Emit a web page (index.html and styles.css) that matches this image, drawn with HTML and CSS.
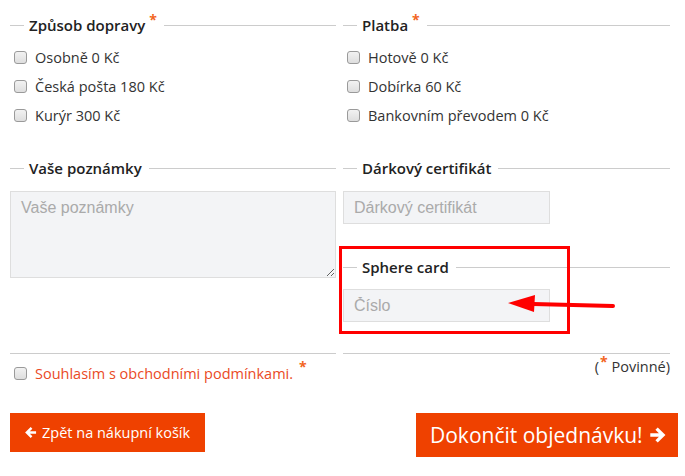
FILE: index.html
```html
<!DOCTYPE html>
<html lang="cs">
<head>
<meta charset="utf-8">
<title>Objednávka</title>
<link rel="stylesheet" href="styles.css">
</head>
<body>
<div class="page">
  <div class="grid">
    <section class="group">
      <h3 class="legend"><span class="legend-text">Způsob dopravy<sup class="req">*</sup></span></h3>
      <label class="opt"><input type="checkbox" class="cb"><span>Osobně 0 Kč</span></label>
      <label class="opt"><input type="checkbox" class="cb"><span>Česká pošta 180 Kč</span></label>
      <label class="opt"><input type="checkbox" class="cb"><span>Kurýr 300 Kč</span></label>
    </section>
    <section class="group">
      <h3 class="legend"><span class="legend-text">Platba<sup class="req">*</sup></span></h3>
      <label class="opt"><input type="checkbox" class="cb"><span>Hotově 0 Kč</span></label>
      <label class="opt"><input type="checkbox" class="cb"><span>Dobírka 60 Kč</span></label>
      <label class="opt"><input type="checkbox" class="cb"><span>Bankovním převodem 0 Kč</span></label>
    </section>

    <section class="group row2">
      <h3 class="legend"><span class="legend-text">Vaše poznámky</span></h3>
      <textarea class="field notes" placeholder="Vaše poznámky"></textarea>
    </section>
    <section class="group row2">
      <h3 class="legend"><span class="legend-text">Dárkový certifikát</span></h3>
      <input class="field short" type="text" placeholder="Dárkový certifikát">
      <h3 class="legend sphere"><span class="legend-text">Sphere card</span></h3>
      <input class="field short" type="text" placeholder="Číslo">
    </section>

    <div class="foot-cell">
      <label class="opt agree"><input type="checkbox" class="cb"><span>Souhlasím s obchodními podmínkami.</span><sup class="req">*</sup></label>
    </div>
    <div class="foot-cell right">
      <span class="required-note">(<sup class="req">*</sup> Povinné)</span>
    </div>
  </div>

  <div class="buttons">
    <button class="btn back" type="button">
      <svg class="ico" viewBox="0 0 14 14" width="13" height="13" aria-hidden="true"><path d="M7.2 1.2 L1.2 7 L7.2 12.8 L9 11 L6.3 8.4 H13 V5.6 H6.3 L9 3 Z" fill="#fff"/></svg>
      Zpět na nákupní košík
    </button>
    <button class="btn finish" type="button">
      Dokončit objednávku!
      <svg class="ico big" viewBox="0 0 14 14" width="18" height="18" aria-hidden="true"><path d="M6.8 1.2 L12.8 7 L6.8 12.8 L5 11 L7.7 8.4 H1 V5.6 H7.7 L5 3 Z" fill="#fff"/></svg>
    </button>
  </div>

  <div class="highlight"></div>
  <svg class="annot-arrow" width="120" height="24" viewBox="0 0 120 24" aria-hidden="true">
    <path d="M30 11 L110 13" stroke="#f00" stroke-width="4" stroke-linecap="round" fill="none"/>
    <path d="M5 10 L32 2 L31 19 Z" fill="#f00"/>
  </svg>
</div>
</body>
</html>
```

FILE: styles.css
```css
* { box-sizing: border-box; }

html, body {
  margin: 0;
  padding: 0;
  background: #fff;
}

body {
  font-family: "Open Sans", "Noto Sans", sans-serif;
  color: #333;
  font-size: 14.5px;
}

.page {
  position: relative;
  width: 685px;
  height: 476px;
  padding: 15px 7px 0 10px;
}

.grid {
  width: 660px;
  display: grid;
  grid-template-columns: 326px 327px;
  column-gap: 7px;
}

.group {
  display: flex;
  flex-direction: column;
  align-items: flex-start;
}

.legend {
  width: 100%;
  margin: 0 0 8px;
  height: 20px;
  display: flex;
  align-items: center;
  font-size: 15px;
  font-weight: 600;
  color: #222;
  line-height: 20px;
}

.legend::before {
  content: "";
  width: 14px;
  height: 1px;
  background: #ccc;
  flex: none;
}

.legend::after {
  content: "";
  flex: 1;
  height: 1px;
  background: #ccc;
}

.legend-text {
  padding: 0 7px 0 5px;
  position: relative;
}

.req {
  color: #f26522;
  font-size: 14px;
  font-weight: 700;
  vertical-align: top;
  line-height: 1;
  position: relative;
  top: -2px;
  margin-left: 4px;
}

.opt {
  display: flex;
  align-items: center;
  height: 29px;
  padding-left: 4px;
  color: #333;
  font-size: 14.5px;
}

.cb {
  -webkit-appearance: none;
  appearance: none;
  width: 13px;
  height: 13px;
  margin: 0 8px 0 0;
  border: 1px solid #9a9a9a;
  border-radius: 3px;
  background: linear-gradient(#f2f2f2, #dedede);
  flex: none;
}

.row2 {
  margin-top: 28px;
}

.row2 .legend {
  margin-bottom: 13px;
}

.field {
  font-family: "Liberation Sans", Arial, sans-serif;
  font-size: 16px;
  background: #f3f4f6;
  border: 1px solid #dedede;
  color: #555;
  border-radius: 0;
  outline: none;
}

.field::placeholder {
  color: #aaa;
}

.notes {
  width: 326px;
  height: 87px;
  padding: 7px 10px;
  resize: vertical;
  margin: 0;
}

.short {
  width: 207px;
  height: 33px;
  padding: 0 10px;
  margin: 0;
}

.legend.sphere {
  margin-top: 33px;
  margin-bottom: 12px;
}

.foot-cell {
  margin-top: 31px;
  border-top: 1px solid #ccc;
  height: 40px;
}

.agree {
  color: #ea4a25;
  height: 36px;
  padding-top: 2px;
}

.agree .req {
  top: -6px;
  margin-left: 6px;
}

.foot-cell.right {
  display: flex;
  justify-content: flex-end;
  align-items: flex-start;
}

.required-note {
  color: #333;
  font-size: 14.5px;
  margin-top: 3px;
}

.required-note .req {
  margin-left: 1px;
  top: -2px;
}

.buttons {
  display: flex;
  justify-content: space-between;
  align-items: flex-start;
  margin-top: 20px;
}

.btn {
  border: none;
  background: #ef4100;
  color: #fff;
  font-family: "Open Sans", "Noto Sans", sans-serif;
  display: flex;
  align-items: center;
  cursor: pointer;
}

.btn.back {
  height: 39px;
  width: 195px;
  padding: 0 0 0 14px;
  font-size: 14.5px;
  gap: 5px;
}

.btn.finish {
  height: 44px;
  width: 262px;
  padding: 0 0 0 14px;
  font-size: 21px;
  gap: 6px;
}

.ico { flex: none; }

.highlight {
  position: absolute;
  left: 339px;
  top: 246px;
  width: 231px;
  height: 88px;
  border: 3px solid #f00;
  pointer-events: none;
}

.annot-arrow {
  position: absolute;
  left: 503px;
  top: 293px;
  pointer-events: none;
}
```
